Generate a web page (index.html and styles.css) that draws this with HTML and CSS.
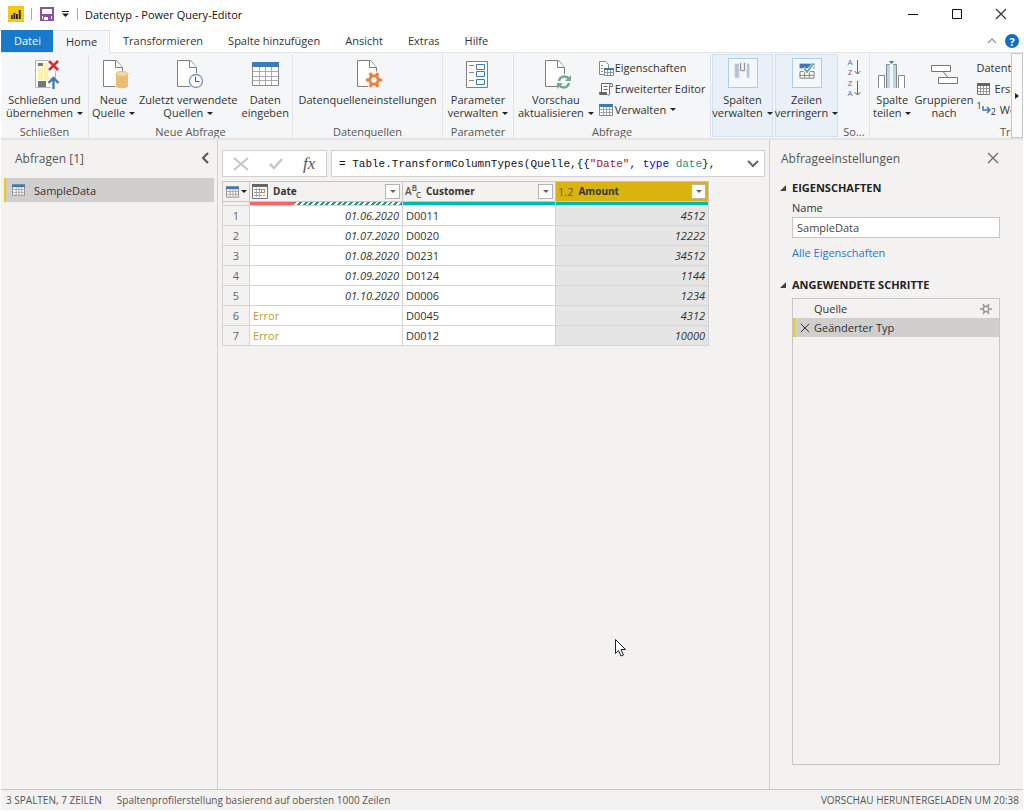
FILE: index.html
```html
<!DOCTYPE html>
<html lang="de">
<head>
    <meta charset="UTF-8">
    <meta name="viewport" content="width=device-width, initial-scale=1.0">
    <title>Datentyp - Power Query-Editor</title>
    <link rel="stylesheet" href="styles.css">
</head>
<body>
    <!-- shared icons -->
    <svg class="defs" aria-hidden="true">
        <symbol id="grid" viewBox="0 0 14 12">
            <path fill="#fff" stroke="#8a8a8a" d="M.5 .5h13v11h-13z"/>
            <path stroke="#a5a5a5" d="M1 5.500h12M1 8.500h12M4.500 3v8M7.500 3v8M10.500 3v8"/>
            <path fill="#3f78b5" d="M0 0h14v3H0z"/>
        </symbol>
        <symbol id="page" viewBox="0 0 32 32">
            <path fill="#fff" stroke="#7f7f7f" d="M5.500 2.500h13l6 7v19h-19z"/>
            <path fill="#fff" stroke="#7f7f7f" d="M17.500 2.500v7h7"/>
        </symbol>
        <symbol id="close" viewBox="0 0 12 12">
            <path fill="none" stroke="currentColor" stroke-width="1.200" d="M1 1l10 10M11 1L1 11"/>
        </symbol>
    </svg>

    <div class="window">
        <header class="titlebar">
            <svg class="logo" width="16" height="16" viewBox="0 0 16 16"><path fill="#f2c811" d="M0 0h16v16H0z"/><path fill="#222" d="M3 9h1.800v4H3zM5.500 7h1.800v6H5.500zM8 8h1.800v5H8zM10.800 4h1.900v9h-1.900z"/></svg>
            <span class="sep"></span>
            <button class="quick" aria-label="Speichern"><svg width="14" height="14" viewBox="0 0 14 14"><path fill="#fff" stroke="#8552a8" stroke-width="2" d="M1 1h12v12H1z"/><path fill="#8552a8" d="M2 7h10v2H2zM3 9h8v4H3z"/><path fill="#fff" d="M4 10h4v3H4z"/></svg></button>
            <button class="quick" aria-label="Schnellzugriff anpassen"><svg width="8" height="6" viewBox="0 0 8 6"><path fill="#222" d="M0 0h7v1H0zM0 2.500h7L3.500 6z"/></svg></button>
            <span class="sep"></span>
            <h1>Datentyp - Power Query-Editor</h1>
            <div class="window-buttons">
                <button aria-label="Minimieren"><svg width="10" height="12" viewBox="0 0 10 12"><path stroke="#111" d="M0 6.500h10"/></svg></button>
                <button aria-label="Maximieren"><svg width="10" height="10" viewBox="0 0 10 10"><path fill="none" stroke="#111" d="M.5 .5h9v9h-9z"/></svg></button>
                <button aria-label="Schließen"><svg width="12" height="12"><use href="#close"/></svg></button>
            </div>
        </header>

        <nav class="tabs">
            <button class="tab file">Datei</button>
            <button class="tab active">Home</button>
            <button class="tab">Transformieren</button>
            <button class="tab">Spalte hinzufügen</button>
            <button class="tab">Ansicht</button>
            <button class="tab">Extras</button>
            <button class="tab">Hilfe</button>
            <div class="tabs-right">
                <button aria-label="Menüband minimieren"><svg width="10" height="6" viewBox="0 0 10 6"><path fill="none" stroke="#999" stroke-width="1.300" d="M1 5l4-4 4 4"/></svg></button>
                <button class="help" aria-label="Hilfe">?</button>
            </div>
        </nav>

        <div class="ribbon">
            <div class="groups">
                <section class="group g-close">
                    <div class="tools">
                        <button class="tool">
                            <svg width="32" height="32" viewBox="0 0 32 32"><path fill="#fff" stroke="#b5b5b5" d="M6.500 2.500h20v27h-20z"/><path fill="#777" d="M9 5h5v3H9zM9 23h8v6H9z"/><path fill="#fff0ae" d="M9 9h5v13H9zM15 5h5l-1 14h5l-5 4h-4z"/><path fill="#f5f6f7" d="M19 1h11v12H19z"/><path stroke="#cf2e34" stroke-width="2.500" d="M20 3l9 9M29 3l-9 9"/><path fill="none" stroke="#f5f6f7" stroke-width="6" d="M24.500 31V20"/><path fill="none" stroke="#3f78b5" stroke-width="2.300" d="M24.500 31V20M19.500 25l5-5 5 5"/></svg>
                            <span>Schließen und<br>übernehmen <i class="caret"></i></span>
                        </button>
                    </div>
                    <h2>Schließen</h2>
                </section>
                <section class="group g-new">
                    <div class="tools">
                        <button class="tool">
                            <svg width="32" height="32" viewBox="0 0 32 32"><use href="#page"/><path fill="#f5f6f7" d="M17 13h12v17H17z"/><path fill="#e9bd72" d="M18 16v12c0 3 12 3 12 0V16z"/><ellipse cx="24" cy="16" rx="6" ry="2.500" fill="#f3d9a8" stroke="#e9bd72"/></svg>
                            <span>Neue<br>Quelle <i class="caret"></i></span>
                        </button>
                        <button class="tool">
                            <svg width="32" height="32" viewBox="0 0 32 32"><use href="#page"/><circle cx="24" cy="23" r="8" fill="#f5f6f7"/><circle cx="24" cy="23" r="6.500" fill="#fff" stroke="#7197c4" stroke-width="1.300"/><path fill="none" stroke="#555" d="M23.500 18.500v5h4"/></svg>
                            <span>Zuletzt verwendete<br>Quellen <i class="caret"></i></span>
                        </button>
                        <button class="tool">
                            <svg width="32" height="32" viewBox="0 0 32 32"><path fill="#fff" stroke="#8a8a8a" d="M3.500 4.500h26v23h-26z"/><path stroke="#aaa" d="M4 13.500h25M4 18.500h25M4 22.500h25M10.500 9v18M16.500 9v18M22.500 9v18"/><path fill="#4179b6" d="M3 4h27v5H3z"/></svg>
                            <span>Daten<br>eingeben</span>
                        </button>
                    </div>
                    <h2>Neue Abfrage</h2>
                </section>
                <section class="group g-sources">
                    <div class="tools">
                        <button class="tool">
                            <svg width="32" height="32" viewBox="0 0 32 32"><use href="#page"/><circle cx="22" cy="22" r="9" fill="#f5f6f7"/><circle cx="22" cy="22" r="4.200" fill="#fff" stroke="#e6833c" stroke-width="3"/><path stroke="#e6833c" stroke-width="3" d="M14 22h3M27 22h3M18 15l1.500 3M26 15l-1.500 3M18 29l1.500-3M26 29l-1.500-3"/></svg>
                            <span>Datenquelleneinstellungen</span>
                        </button>
                    </div>
                    <h2>Datenquellen</h2>
                </section>
                <section class="group g-params">
                    <div class="tools">
                        <button class="tool">
                            <svg width="32" height="32" viewBox="0 0 32 32"><path fill="#fff" stroke="#7f7f7f" d="M4.500 3.500h21v26h-21z"/><path stroke="#888" d="M7 7.500h5M7 14.500h5M7 22.500h5"/><path fill="#fff" stroke="#3f78b5" d="M14.500 6.500h8v5h-8zM14.500 13.500h8v5h-8zM14.500 21.500h8v5h-8z"/></svg>
                            <span>Parameter<br>verwalten <i class="caret"></i></span>
                        </button>
                    </div>
                    <h2>Parameter</h2>
                </section>
                <section class="group g-query">
                    <div class="tools">
                        <button class="tool">
                            <svg width="32" height="32" viewBox="0 0 32 32"><use href="#page"/><circle cx="24" cy="24" r="8" fill="#f5f6f7"/><path fill="none" stroke="#74a892" stroke-width="2.500" d="M19 23c1-5 7-6 10-2M29 25c-1 5-7 6-10 2"/><path fill="#74a892" d="M31 17v6h-6zM17 31v-6h6z"/></svg>
                            <span>Vorschau<br>aktualisieren <i class="caret"></i></span>
                        </button>
                        <div class="small-tools">
                            <button><svg width="16" height="16" viewBox="0 0 16 16"><path fill="#fff" stroke="#888" d="M1.500 1.500h6l3 3v10h-9z"/><path stroke="#888" d="M3 5.500h2M3 8.500h2M3 11.500h2"/><path fill="#fff" stroke="#888" d="M6.500 8.500h9v7h-9z"/><path stroke="#999" d="M7 12.500h8M9.500 9v6M12.500 9v6"/><path fill="#3f78b5" d="M6 8h10v2H6z"/></svg>Eigenschaften</button>
                            <button><svg width="16" height="16" viewBox="0 0 16 16"><path fill="#fff" stroke="#666" d="M3.500 11V2.500h10c-2 0-2 2-2 3v8c0 1-2 1-2 0"/><path fill="none" stroke="#666" d="M11.500 5.500h3c0-2 0-3-1-3M5.500 5.500h4M5.500 8.500h4"/><path fill="#666" d="M1 11h8v3H2c-1 0-1-2-1-3z"/></svg>Erweiterter Editor</button>
                            <button><svg width="16" height="16" viewBox="-1 -2 16 16"><use href="#grid" width="14" height="12"/></svg>Verwalten <i class="caret"></i></button>
                        </div>
                    </div>
                    <h2>Abfrage</h2>
                </section>
                <div class="group-boxes">
                    <button class="tool boxed">
                        <svg width="30" height="30" viewBox="0 0 30 30"><path fill="#b5cbe3" d="M6 5h5v15H6zM19 5h3v15h-3z"/><path fill="#bbb" d="M8 5h1v15H8zM20 5h1v15h-1z"/><path fill="none" stroke="#777" d="M12.500 4v8.500h4V4"/></svg>
                        <span>Spalten<br>verwalten <i class="caret"></i></span>
                    </button>
                    <button class="tool boxed">
                        <svg width="30" height="30" viewBox="0 0 30 30"><path fill="#fff" stroke="#777" d="M7.500 13.500h15v7h-15zM7 17.500h15M12.500 14v6M17.500 14v6"/><path fill="#3f78b5" d="M7 5h16v5H7z"/><path fill="none" stroke="#fff" stroke-width="4" d="M11 10l4 4 7-8"/><path fill="none" stroke="#69a68c" stroke-width="2" d="M12 10l3 4 7-9"/></svg>
                        <span>Zeilen<br>verringern <i class="caret"></i></span>
                    </button>
                </div>
                <section class="group g-sort">
                    <div class="tools">
                        <button aria-label="Aufsteigend sortieren"><span class="az"><b>A</b><em>Z</em></span><svg width="7" height="15" viewBox="0 0 7 15"><path fill="none" stroke="#666" d="M3.500 0v14M.5 11l3 3 3-3"/></svg></button>
                        <button aria-label="Absteigend sortieren"><span class="az"><em>Z</em><b>A</b></span><svg width="7" height="15" viewBox="0 0 7 15"><path fill="none" stroke="#666" d="M3.500 0v14M.5 11l3 3 3-3"/></svg></button>
                    </div>
                    <h2>So...</h2>
                </section>
                <section class="group g-transform">
                    <div class="tools">
                        <button class="tool">
                            <svg width="32" height="32" viewBox="0 0 32 32"><path fill="#fff" stroke="#888" d="M2.500 30V17.500h6V30M22.500 30V17.500h6V30M10.500 30V6.500h3V30M17.500 30V6.500h3V30"/><path fill="#bdd3e8" d="M11 7h3v23h-3zM17 7h3v23h-3z"/><path fill="#3f78b5" d="M13 3h5l-2.500 3z"/></svg>
                            <span>Spalte<br>teilen <i class="caret"></i></span>
                        </button>
                        <button class="tool">
                            <svg width="32" height="32" viewBox="0 0 32 32"><path fill="#fff" stroke="#777" d="M3.500 7.500h19v6h-19zM10.500 19.500h19v6h-19zM15 13.500l5 6"/></svg>
                            <span>Gruppieren<br>nach</span>
                        </button>
                        <div class="small-tools">
                            <button>Datentyp</button>
                            <button><svg width="14" height="14" viewBox="0 0 14 14"><path fill="#fff" stroke="#777" d="M.5 1.500h12v11H.5z"/><path stroke="#999" d="M1 6.500h11M1 9.500h11M3.500 3v9M6.500 3v9M9.500 3v9"/><path fill="#666" d="M0 1h13v3H0z"/></svg>Erste</button>
                            <button><span class="onetwo"><span>1</span><svg width="9" height="8" viewBox="0 0 9 8"><path fill="none" stroke="#3f78b5" stroke-width="1.500" d="M1 0v4h6M5 1l3 3-3 3"/></svg><span>2</span></span>Werte</button>
                        </div>
                    </div>
                    <h2>Transformieren</h2>
                </section>
            </div>
            <button class="ribbon-scroll" aria-label="Weiter"><svg width="4" height="6" viewBox="0 0 4 6"><path fill="#222" d="M0 0l4 3-4 3z"/></svg></button>
        </div>

        <main>
            <aside class="queries">
                <div class="pane-head">
                    <h3>Abfragen [1]</h3>
                    <button aria-label="Einklappen"><svg width="8" height="12" viewBox="0 0 8 12"><path fill="none" stroke="#555" stroke-width="2" d="M7 1L2 6l5 5"/></svg></button>
                </div>
                <button class="query"><svg width="13" height="12"><use href="#grid"/></svg>SampleData</button>
            </aside>

            <div class="center">
                <div class="formula">
                    <div class="formula-buttons">
                        <button aria-label="Abbrechen"><svg width="16" height="14" viewBox="0 0 16 14"><path stroke="#c6c6c6" stroke-width="2" d="M1 1l14 12M15 1L1 13"/></svg></button>
                        <button aria-label="Übernehmen"><svg width="14" height="12" viewBox="0 0 14 12"><path fill="none" stroke="#c6c6c6" stroke-width="2.500" d="M1 6l4 4 8-9"/></svg></button>
                        <button class="fx" aria-label="Schritt hinzufügen">fx</button>
                    </div>
                    <div class="formula-box">
                        <code>= Table.TransformColumnTypes(Quelle,{{<span class="str">"Date"</span>, <span class="kw">type</span> <span class="type">date</span>},</code>
                        <button aria-label="Erweitern"><svg width="12" height="8" viewBox="0 0 12 8"><path fill="none" stroke="#666" stroke-width="2" d="M1 1l5 5 5-5"/></svg></button>
                    </div>
                </div>

                <table>
                    <colgroup>
                        <col class="col-num">
                        <col class="col-date">
                        <col class="col-customer">
                        <col>
                    </colgroup>
                    <thead>
                        <tr>
                            <th><div class="cell-head corner"><svg width="13" height="12"><use href="#grid"/></svg><i class="caret"></i></div></th>
                            <th><div class="cell-head"><svg width="16" height="15" viewBox="0 0 16 15"><path fill="#fff" stroke="#777" d="M.5 .5h15v14H.5z"/><path stroke="#999" stroke-dasharray="2 1" d="M2 5.500h12M2 8.500h12M2 11.500h12"/><path stroke="#aaa" d="M4.500 4v9M7.500 4v9"/><path fill="#666" d="M0 0h16v3H0z"/><path fill="#fff" stroke="#e07a35" d="M9.500 5.500h3v3h-3z"/></svg><span>Date</span><button class="filter" aria-label="Date filtern"></button></div></th>
                            <th><div class="cell-head"><span class="abc">A<sup>B</sup><sub>C</sub></span><span>Customer</span><button class="filter" aria-label="Customer filtern"></button></div></th>
                            <th class="selected"><div class="cell-head"><span class="num-type">1.2</span><span>Amount</span><button class="filter" aria-label="Amount filtern"></button></div></th>
                        </tr>
                        <tr class="quality">
                            <td></td>
                            <td><div class="bar"><div class="bad"></div><div class="unknown"></div></div></td>
                            <td><div class="bar good"></div></td>
                            <td><div class="bar good"></div></td>
                        </tr>
                    </thead>
                    <tbody>
                        <tr><th>1</th><td class="value">01.06.2020</td><td>D0011</td><td class="value">4512</td></tr>
                        <tr><th>2</th><td class="value">01.07.2020</td><td>D0020</td><td class="value">12222</td></tr>
                        <tr><th>3</th><td class="value">01.08.2020</td><td>D0231</td><td class="value">34512</td></tr>
                        <tr><th>4</th><td class="value">01.09.2020</td><td>D0124</td><td class="value">1144</td></tr>
                        <tr><th>5</th><td class="value">01.10.2020</td><td>D0006</td><td class="value">1234</td></tr>
                        <tr><th>6</th><td class="error">Error</td><td>D0045</td><td class="value">4312</td></tr>
                        <tr><th>7</th><td class="error">Error</td><td>D0012</td><td class="value">10000</td></tr>
                    </tbody>
                </table>
            </div>

            <aside class="settings">
                <div class="pane-head">
                    <h3>Abfrageeinstellungen</h3>
                    <button aria-label="Schließen"><svg width="12" height="12"><use href="#close"/></svg></button>
                </div>
                <h4>EIGENSCHAFTEN</h4>
                <label for="name">Name</label>
                <input id="name" type="text" value="SampleData">
                <a href="#">Alle Eigenschaften</a>
                <h4>ANGEWENDETE SCHRITTE</h4>
                <ul class="steps">
                    <li><span>Quelle</span><button aria-label="Einstellungen"><svg width="12" height="12" viewBox="0 0 12 12"><circle cx="6" cy="6" r="2.700" fill="none" stroke="#999" stroke-width="1.500"/><path stroke="#999" stroke-width="1.500" d="M0 6h3M9 6h3M3 1l1.500 2.500M9 1L7.500 3.500M3 11l1.500-2.500M9 11L7.500 8.500"/></svg></button></li>
                    <li class="current"><button aria-label="Löschen"><svg width="10" height="10"><use href="#close"/></svg></button><span>Geänderter Typ</span></li>
                </ul>
            </aside>
        </main>

        <footer>
            <span>3 SPALTEN, 7 ZEILEN</span>
            <span>Spaltenprofilerstellung basierend auf obersten 1000 Zeilen</span>
            <span class="right">VORSCHAU HERUNTERGELADEN UM 20:38</span>
        </footer>
    </div>

    <svg class="pointer" width="13" height="20" viewBox="0 0 13 20"><path fill="#fff" stroke="#223" d="M1.500 1.500v14l3-3 2.500 5.500 2.500-1-2.500-5.500h4.500z"/></svg>
</body>
</html>
```
FILE: styles.css
```css
* {
    box-sizing: border-box;
}

body {
    margin: 0;
    background: #fff;
    color: #333;
    font-family: "Open Sans", "Segoe UI", sans-serif;
    font-size: 11px;
    line-height: 13px;
}

h1, h2, h3, h4, ul {
    margin: 0;
    padding: 0;
    font-size: 11px;
    font-weight: normal;
    list-style: none;
}

button {
    padding: 0;
    border: 0;
    background: none;
    color: inherit;
    font: inherit;
}

svg {
    display: block;
    flex: none;
}

.defs {
    position: absolute;
    width: 0;
    height: 0;
}

.window {
    display: flex;
    flex-direction: column;
    height: 100vh;
    padding: 0 1px 1px;
    overflow: hidden;
}

/* Title bar */
.titlebar {
    display: flex;
    align-items: center;
    gap: 7px;
    flex: none;
    height: 30px;
    padding: 0 0 2px 7px;
}

.titlebar h1 {
    color: #111;
}

.sep {
    width: 1px;
    height: 12px;
    background: #aaa;
}

.quick {
    margin-left: 1px;
}

.window-buttons {
    display: flex;
    margin-left: auto;
}

.window-buttons button {
    display: flex;
    align-items: center;
    justify-content: center;
    width: 44px;
    height: 28px;
}

/* Tabs */
.tabs {
    display: flex;
    flex: none;
    height: 22px;
}

.tab {
    padding: 0 12px 1px 13px;
}

.tab.file {
    background: #1979ca;
    color: #fff;
}

.tab.active {
    height: 23px;
    border: 1px solid #e1e3e5;
    border-width: 1px 1px 0 0;
    background: #f5f6f7;
    z-index: 1;
}

.tabs-right {
    display: flex;
    align-items: center;
    gap: 8px;
    margin-left: auto;
    padding-right: 4px;
}

.help {
    width: 14px;
    height: 14px;
    border-radius: 50%;
    background: #0d6fc8;
    color: #fff;
    font-weight: bold;
}

/* Ribbon */
.ribbon {
    display: flex;
    flex: none;
    height: 88px;
    border-top: 1px solid #e1e3e5;
    border-bottom: 2px solid #e4e5e6;
    background: #f5f6f7;
}

.groups {
    display: flex;
    flex: 1;
    min-width: 0;
    overflow: hidden;
    white-space: nowrap;
}

.group {
    display: flex;
    flex-direction: column;
    flex: none;
    margin-top: 2px;
    border-right: 1px solid #e1e3e5;
}

.group h2 {
    color: #555;
    text-align: center;
}

.tools {
    display: flex;
    flex: 1;
    align-items: flex-start;
    justify-content: center;
    padding-top: 3px;
}

.tool {
    display: flex;
    flex-direction: column;
    align-items: center;
    text-align: center;
    gap: 3px;
}

.caret {
    display: inline-block;
    width: 0;
    margin-left: 1px;
    border: 3px solid transparent;
    border-top-color: #222;
    border-bottom: 0;
    vertical-align: 2px;
}

.g-close { width: 88px; }
.g-new { width: 204px; }
.g-sources { width: 150px; }
.g-params { width: 71px; }
.g-query { width: 197px; }
.g-sort { width: 31px; }
.g-transform { width: 300px; }

.g-new .tools {
    gap: 4px;
}

.g-query .tools {
    gap: 4px;
    justify-content: flex-start;
    padding-left: 4px;
}

.small-tools {
    display: flex;
    flex-direction: column;
}

.small-tools button {
    display: flex;
    align-items: center;
    gap: 1px;
    height: 21px;
}

.tools .small-tools {
    margin-top: -1px;
}

.small-tools .caret {
    margin-left: 3px;
}

.group-boxes {
    display: flex;
    flex: none;
    gap: 2px;
    padding: 1px;
}

.boxed {
    width: 61px;
    padding-top: 3px;
    gap: 5px;
    border: 1px solid #cfe2f5;
    background: #e9f0f7;
}

.boxed + .boxed {
    width: 63px;
}

.boxed svg {
    border: 1px solid #a9cdf0;
    background: #f4f8fc;
}

.g-sort .tools {
    flex-direction: column;
    justify-content: flex-start;
    align-items: center;
    gap: 1px;
    padding-top: 2px;
}

.g-sort button {
    display: flex;
    align-items: center;
    gap: 1px;
}

.az {
    display: flex;
    flex-direction: column;
    font-size: 8px;
    line-height: 10px;
}

.az b {
    color: #3f78b5;
    font-weight: normal;
}

.az em {
    color: #8552a8;
    font-style: normal;
}

.g-transform .tools {
    justify-content: flex-start;
    gap: 3px;
    padding-left: 3px;
}

.g-transform h2 {
    padding-left: 130px;
    text-align: left;
}

.g-transform .small-tools button {
    gap: 4px;
}

.onetwo {
    display: flex;
    align-items: center;
    font-size: 9px;
}

.onetwo span:first-child {
    padding-bottom: 8px;
}

.onetwo span:last-child {
    padding-top: 4px;
}

.ribbon-scroll {
    display: flex;
    align-items: center;
    justify-content: center;
    flex: none;
    width: 12px;
    border: 1px solid #c8c8c8;
    background: #fafafa;
}

/* Panes */
main {
    display: flex;
    flex: 1;
    min-height: 0;
    background: #f3f2f1;
}

.queries {
    flex: none;
    width: 217px;
    padding: 0 3px;
    border-right: 1px solid #d2d0ce;
}

.pane-head {
    display: flex;
    align-items: center;
    justify-content: space-between;
    height: 36px;
    padding: 0 5px 0 11px;
}

.pane-head h3 {
    color: #555;
    font-size: 12px;
}

.pane-head button {
    color: #666;
}

.query {
    display: flex;
    align-items: center;
    gap: 9px;
    width: 100%;
    height: 24px;
    margin-top: 2px;
    padding-left: 6px;
    border-left: 2px solid #f2c811;
    background: #d0cfce;
}

.center {
    flex: 1;
    min-width: 0;
    padding: 10px 4px;
}

.formula {
    display: flex;
    gap: 4px;
    height: 27px;
    margin-bottom: 4px;
}

.formula-buttons,
.formula-box {
    display: flex;
    align-items: center;
    border: 1px solid #d2d0ce;
    background: #fff;
}

.formula-buttons {
    gap: 20px;
    width: 105px;
    padding-left: 10px;
}

.fx {
    color: #555;
    font: italic 17px "Liberation Serif", serif;
}

.formula-box {
    flex: 1;
    justify-content: space-between;
    min-width: 0;
    padding: 0 5px 0 7px;
}

.formula-box code {
    color: #111;
    font: 11px "Liberation Mono", monospace;
    white-space: pre;
}

.str { color: #a31515; }
.kw { color: #0000ff; }
.type { color: #218f90; }

/* Data table */
table {
    width: 487px;
    max-width: 100%;
    table-layout: fixed;
    border-collapse: collapse;
}

.col-num { width: 27px; }
.col-date,
.col-customer { width: 153px; }

table th,
table td {
    height: 20px;
    padding: 0 3px;
    overflow: hidden;
    border: 1px solid #d6d4d2;
    background: #fff;
    font-weight: normal;
    text-align: left;
    white-space: nowrap;
}

table th {
    background: #f3f2f1;
}

tbody th {
    padding: 0;
    color: #666;
    text-align: center;
}

thead th {
    padding: 0 2px;
    border-color: #c8c6c4;
    font-size: 10px;
    font-weight: bold;
}

.cell-head {
    display: flex;
    align-items: center;
    gap: 5px;
    height: 19px;
}

.cell-head.corner {
    justify-content: center;
    gap: 1px;
}

.filter {
    display: flex;
    align-items: center;
    justify-content: center;
    width: 15px;
    height: 15px;
    margin-left: auto;
    border: 1px solid #b5b3b1;
    background: #fff;
}

.filter::after {
    content: "";
    border: 3px solid transparent;
    border-top-color: #666;
    border-bottom: 0;
}

.abc {
    color: #555;
    font-weight: 600;
}

.abc sup,
.abc sub {
    font-size: 8px;
    line-height: 0;
}

.abc sub {
    margin-left: -1px;
}

.num-type {
    color: #6e6127;
    font-size: 11px;
    font-weight: normal;
}

thead th.selected {
    background: #d9b310;
}

.quality td {
    height: 4px;
    padding: 0;
    border-color: #d6d4d2;
    line-height: 0;
}

.quality td:first-child {
    background: #f3f2f1;
}

.bar {
    display: flex;
    height: 3px;
}

.bar.good {
    background: #01b8aa;
}

.bad {
    width: 29%;
    background: #fd625e;
}

.unknown {
    flex: 1;
    background: repeating-linear-gradient(135deg, #37918a 0 2px, #fff 2px 4px);
}

tbody .value {
    font-style: italic;
    text-align: right;
}

tbody td:last-child {
    background: #e5e5e5;
}

tbody .error {
    color: #c29a2c;
}

/* Query settings */
.settings {
    display: flex;
    flex-direction: column;
    flex: none;
    width: 254px;
    padding: 0 23px 24px 22px;
    border-left: 1px solid #d2d0ce;
}

.settings .pane-head {
    flex: none;
    margin-left: -22px;
    padding: 0 1px 0 11px;
}

.settings h4 {
    position: relative;
    margin-top: 5px;
    color: #222;
    font-weight: bold;
}

.settings h4::before {
    content: "";
    position: absolute;
    left: -12px;
    top: 4px;
    border: 3px solid #444;
    border-top-color: transparent;
    border-left-color: transparent;
}

.settings label {
    margin: 7px 0 3px;
}

.settings input {
    height: 21px;
    padding: 0 4px;
    border: 1px solid #c8c6c4;
    background: #fff;
    color: #444;
    font: inherit;
}

.settings a {
    align-self: flex-start;
    margin: 8px 0 14px;
    color: #1979ca;
    text-decoration: none;
}

.steps {
    flex: 1;
    margin-top: 7px;
    border: 1px solid #c8c6c4;
}

.steps li {
    display: flex;
    align-items: center;
    justify-content: space-between;
    height: 19px;
    padding: 0 7px 0 21px;
}

.steps .current {
    justify-content: flex-start;
    gap: 4px;
    padding-left: 5px;
    border-left: 2px solid #f2c811;
    background: #d0cfce;
}

/* Status bar */
footer {
    display: flex;
    align-items: center;
    gap: 15px;
    flex: none;
    height: 21px;
    padding: 0 4px 0 5px;
    border-top: 1px solid #c8c6c4;
    background: #f3f2f1;
    color: #555;
    font-size: 10px;
    white-space: nowrap;
}

footer .right {
    margin-left: auto;
}

.pointer {
    position: absolute;
    left: 614px;
    top: 638px;
}
```
